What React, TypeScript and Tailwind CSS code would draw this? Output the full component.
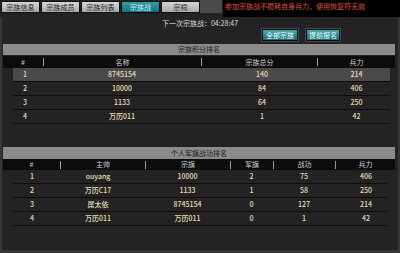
const tabs = ["宗族信息", "宗族成员", "宗族列表", "宗族战", "宗祠"];

const clanRows = [
  ["1", "8745154", "140", "214"],
  ["2", "10000", "84", "406"],
  ["3", "1133", "64", "250"],
  ["4", "万历011", "1", "42"],
];

const soloRows = [
  ["1", "ouyang", "10000", "2", "75", "406"],
  ["2", "万历C17", "1133", "1", "58", "250"],
  ["3", "屌太依", "8745154", "0", "127", "214"],
  ["4", "万历011", "万历011", "0", "1", "42"],
];

const Sep = () => <div className="w-px h-[8px] bg-[#9a9a9a] self-center" />;

const App = () => {
  return (
    <div
      className="w-[400px] h-[253px] bg-[#363636] overflow-hidden flex flex-col text-[7px] leading-none"
      style={{ fontFamily: '"Noto Sans CJK SC", "Noto Sans", sans-serif' }}
    >
      {/* tab strip */}
      <div className="flex h-[17px] shrink-0">
        <div className="w-[223px] h-full bg-[#232323] flex items-start">
          <div className="flex gap-[1px] pt-[1px] pl-[1px]">
            {tabs.map((t) => (
              <div
                key={t}
                className={
                  t === "宗族战"
                    ? "w-[39px] h-[12px] flex items-center justify-center border border-[#0c0c0c] bg-gradient-to-b from-[#2aa3aa] to-[#11737a] text-[#d8f4f4]"
                    : "w-[39px] h-[12px] flex items-center justify-center border border-[#111] bg-gradient-to-b from-[#d6d6d6] to-[#a9a9a9] text-[#1e1e1e]"
                }
              >
                {t}
              </div>
            ))}
          </div>
          <div className="w-[22px] h-[13px] bg-[#4a4a4a]" />
        </div>
        <div className="flex-1 h-full bg-black pl-[2px] pt-[3px] text-[#e2542c]">
          参加宗族战不损耗自身兵力，使用恢复符无效
        </div>
      </div>

      {/* panel */}
      <div className="flex-1 mx-[2px] mb-[3px] bg-[#232323] flex flex-col">
        <div className="h-[12px] flex items-center justify-center text-[#dcdcdc] pt-[1px]">
          下一次宗族战：04:28:47
        </div>
        <div className="h-[12px] flex justify-end gap-[8px] pr-[58px]">
          <div className="w-[36px] h-full flex items-center justify-center border border-[#0a0a0a] ring-1 ring-[#4a4a4a] bg-gradient-to-b from-[#3db0b6] to-[#126c73] text-white">
            全部宗族
          </div>
          <div className="w-[34px] h-full flex items-center justify-center border border-[#0a0a0a] ring-1 ring-[#4a4a4a] bg-gradient-to-b from-[#3db0b6] to-[#126c73] text-white">
            提前报名
          </div>
        </div>

        {/* clan ranking */}
        <div className="mt-[3px] ml-[1px] w-[392px] h-[11px] bg-[#8b8b8b] flex items-center justify-center text-[#1a1a1a]">
          宗族积分排名
        </div>
        <div className="mt-[1px] ml-[1px] w-[392px] h-[12px] bg-[#0c0c0c] grid grid-cols-[40px_1px_157px_1px_115px_1px_1fr] text-[#d0d0d0]">
          <div className="flex items-center justify-center">#</div>
          <Sep />
          <div className="flex items-center justify-center">名称</div>
          <Sep />
          <div className="flex items-center justify-center">宗族总分</div>
          <Sep />
          <div className="flex items-center justify-center">兵力</div>
        </div>
        <div className="ml-[11px] w-[377px] flex flex-col">
          {clanRows.map((r, i) => (
            <div
              key={r[0]}
              className={`h-[14px] grid grid-cols-[24px_170px_110px_1fr] items-center border-b border-[#0d0d0d] text-[#e6dfb2] font-medium ${
                i === 0 ? "bg-[#4a4a4a]" : ""
              }`}
            >
              <div className="text-center">{r[0]}</div>
              <div className="text-center">{r[1]}</div>
              <div className="text-center">{r[2]}</div>
              <div className="text-center pl-[6px]">{r[3]}</div>
            </div>
          ))}
        </div>

        {/* personal ranking */}
        <div className="mt-[23px] ml-[1px] w-[392px] h-[12px] bg-[#8b8b8b] flex items-center justify-center text-[#1a1a1a]">
          个人军旗战功排名
        </div>
        <div className="ml-[1px] w-[392px] h-[11px] bg-[#0c0c0c] grid grid-cols-[57px_1px_84px_1px_84px_1px_42px_1px_61px_1px_1fr] text-[#d0d0d0]">
          <div className="flex items-center justify-center">#</div>
          <Sep />
          <div className="flex items-center justify-center">主帅</div>
          <Sep />
          <div className="flex items-center justify-center">宗旗</div>
          <Sep />
          <div className="flex items-center justify-center">军旗</div>
          <Sep />
          <div className="flex items-center justify-center">战功</div>
          <Sep />
          <div className="flex items-center justify-center">兵力</div>
        </div>
        <div className="ml-[11px] w-[374px] flex flex-col">
          {soloRows.map((r) => (
            <div
              key={r[0]}
              className="h-[14px] grid grid-cols-[38px_94px_85px_43px_62px_1fr] items-center border-b border-[#0d0d0d] text-[#e6dfb2] font-medium"
            >
              <div className="text-center">{r[0]}</div>
              <div className="text-center">{r[1]}</div>
              <div className="text-center">{r[2]}</div>
              <div className="text-center">{r[3]}</div>
              <div className="text-center">{r[4]}</div>
              <div className="text-center pl-[10px]">{r[5]}</div>
            </div>
          ))}
        </div>
      </div>
    </div>
  );
};

export default App;
